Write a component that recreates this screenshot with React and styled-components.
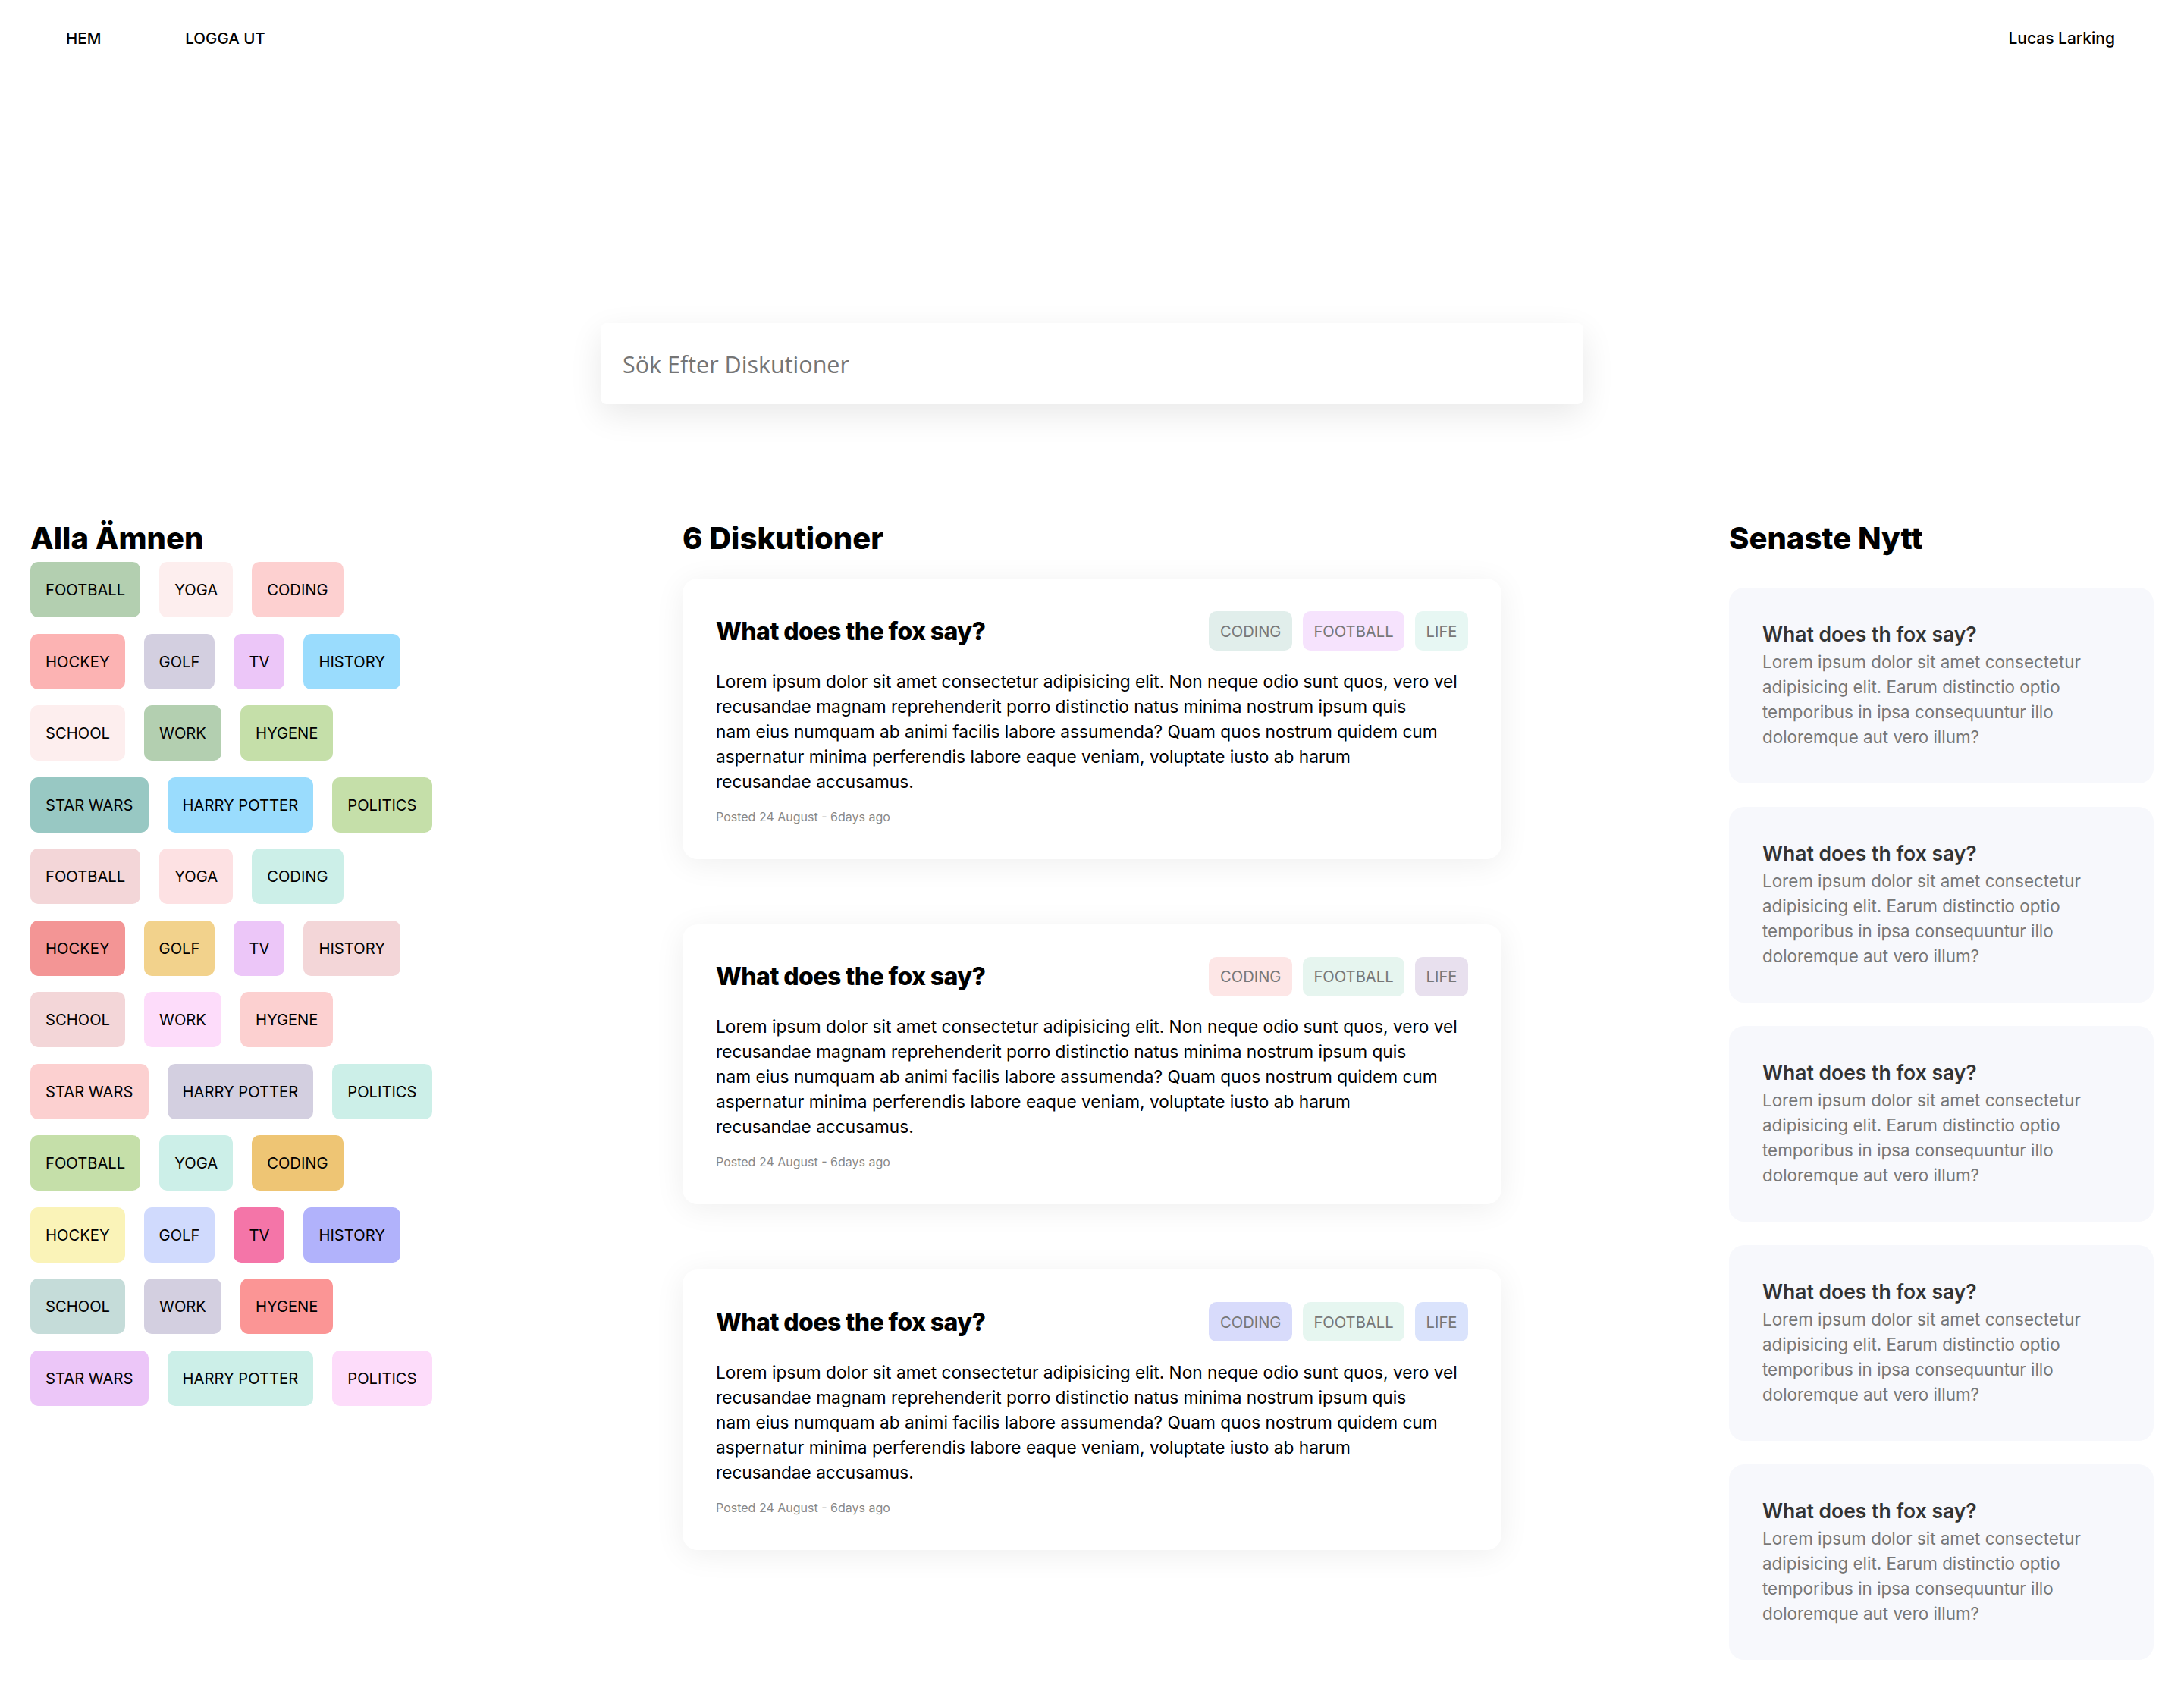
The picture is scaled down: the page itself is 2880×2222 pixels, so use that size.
import React from "react";
import styled, { createGlobalStyle } from "styled-components";

const GlobalStyle = createGlobalStyle`
  html, body {
    margin: 0;
    padding: 0;
    background: #ffffff;
  }
  body {
    font-family: Inter, "Noto Sans", sans-serif;
    color: #000;
  }
  * { box-sizing: border-box; }
`;

const Page = styled.div`
  width: 2880px;
  min-height: 2222px;
  background: #fff;
`;

const Header = styled.header`
  display: flex;
  align-items: center;
  height: 100px;
  padding: 0 91px 0 87px;
`;

const NavLinks = styled.nav`
  display: flex;
  gap: 111px;
`;

const NavLink = styled.a`
  font-size: 20.5px;
  font-weight: 500;
  text-transform: uppercase;
  color: #000;
  text-decoration: none;
`;

const UserName = styled.span`
  margin-left: auto;
  font-size: 21px;
  font-weight: 500;
`;

const SearchWrap = styled.div`
  display: flex;
  justify-content: center;
  margin-top: 326px;
`;

const SearchInput = styled.input`
  width: 1296px;
  height: 107px;
  border: none;
  outline: none;
  border-radius: 8px;
  padding: 0 29px;
  font-family: "Open Sans", "Noto Sans", sans-serif;
  font-size: 30.5px;
  background: #fff;
  box-shadow: 0 14px 44px rgba(0, 0, 0, 0.09);
  &::placeholder {
    color: #757575;
  }
`;

const Main = styled.main`
  display: flex;
  justify-content: space-between;
  align-items: flex-start;
  padding: 0 40px;
  margin-top: 153px;
`;

const Column = styled.section`
  width: ${(p) => p.$width}px;
  display: flex;
  flex-direction: column;
`;

const Heading = styled.h2`
  margin: 0 0 ${(p) => p.$gap}px;
  font-size: 40px;
  line-height: 48px;
  font-weight: 800;
  letter-spacing: 0;
`;

const TagGrid = styled.div`
  display: flex;
  flex-direction: column;
  gap: 21.5px;
`;

const TagRow = styled.div`
  display: flex;
  gap: 25px;
`;

const Tag = styled.span`
  display: inline-flex;
  align-items: center;
  height: 73px;
  padding: 0 20px;
  border-radius: 10px;
  font-size: 20.2px;
  color: #000;
  background: ${(p) => p.$bg};
  text-transform: uppercase;
`;

const Card = styled.article`
  background: #fff;
  border-radius: 20px;
  padding: 43px 44px 44px;
  box-shadow: 0 6px 40px rgba(0, 0, 0, 0.065);
  margin-bottom: 86px;
`;

const CardHead = styled.div`
  display: flex;
  justify-content: space-between;
  align-items: center;
`;

const CardTitle = styled.h3`
  margin: 0;
  font-size: 32px;
  font-weight: 800;
  letter-spacing: -0.6px;
`;

const ChipList = styled.div`
  display: flex;
  gap: 14px;
`;

const Chip = styled.span`
  display: inline-flex;
  align-items: center;
  height: 52px;
  padding: 0 14.5px;
  border-radius: 10px;
  font-size: 20.2px;
  color: #777;
  background: ${(p) => p.$bg};
`;

const CardBody = styled.p`
  margin: 23.5px 0 0;
  font-size: 22.7px;
  line-height: 33px;
  color: #000;
`;

const BodyLine = styled.span`
  display: block;
  white-space: nowrap;
`;

const Posted = styled.div`
  margin-top: 18px;
  font-size: 16px;
  line-height: 24px;
  color: #888;
`;

const NewsCard = styled.article`
  background: #f7f8fc;
  border-radius: 20px;
  padding: 42px 44px 44.5px;
  margin-bottom: 31.5px;
`;

const NewsTitle = styled.h4`
  margin: 0;
  font-size: 26.5px;
  line-height: 39px;
  font-weight: 600;
  color: #333;
`;

const NewsBody = styled.p`
  margin: 0;
  font-size: 22.4px;
  line-height: 33px;
  color: #777;
`;

const tagRows = [
  [["Football", "#b3cfb0"], ["Yoga", "#fdeeee"], ["Coding", "#fdd0d0"]],
  [["Hockey", "#fcb3b3"], ["Golf", "#d3cfe0"], ["TV", "#ecc6f8"], ["History", "#9adcfd"]],
  [["School", "#fdeeee"], ["Work", "#b3cfb0"], ["Hygene", "#c5dfa9"]],
  [["Star Wars", "#98c8c3"], ["Harry Potter", "#9adcfd"], ["Politics", "#c5dfa9"]],
  [["Football", "#f3d6d8"], ["Yoga", "#fde1e3"], ["Coding", "#ccefe8"]],
  [["Hockey", "#f39595"], ["Golf", "#f2d28c"], ["TV", "#ecc6f8"], ["History", "#f3d6d8"]],
  [["School", "#f3d6d8"], ["Work", "#fddcfa"], ["Hygene", "#fcd0d0"]],
  [["Star Wars", "#fcd0d0"], ["Harry Potter", "#d3cfe0"], ["Politics", "#ccefe8"]],
  [["Football", "#c5dfa9"], ["Yoga", "#ccefe8"], ["Coding", "#eec574"]],
  [["Hockey", "#faf3b8"], ["Golf", "#d0dafd"], ["TV", "#f475a8"], ["History", "#b1b2fb"]],
  [["School", "#c5dcd9"], ["Work", "#d3cfe0"], ["Hygene", "#fb9595"]],
  [["Star Wars", "#ecc6f8"], ["Harry Potter", "#ccefe8"], ["Politics", "#fddcfa"]],
];

const discussions = [
  ["#e1eeeb", "#f6e3fd", "#e7f7f3"],
  ["#fde6e6", "#e6f5ef", "#e8e0ee"],
  ["#d8dbfb", "#e6f6f0", "#dae3fc"],
];

const loremLines = [
  "Lorem ipsum dolor sit amet consectetur adipisicing elit. Non neque odio sunt quos, vero vel",
  "recusandae magnam reprehenderit porro distinctio natus minima nostrum ipsum quis",
  "nam eius numquam ab animi facilis labore assumenda? Quam quos nostrum quidem cum",
  "aspernatur minima perferendis labore eaque veniam, voluptate iusto ab harum",
  "recusandae accusamus.",
];

const newsLorem =
  "Lorem ipsum dolor sit amet consectetur adipisicing elit. Earum distinctio optio temporibus in ipsa consequuntur illo doloremque aut vero illum?";

export default function App() {
  return (
    <Page>
      <GlobalStyle />
      <Header>
        <NavLinks>
          <NavLink href="#">Hem</NavLink>
          <NavLink href="#">Logga ut</NavLink>
        </NavLinks>
        <UserName>Lucas Larking</UserName>
      </Header>

      <SearchWrap>
        <SearchInput placeholder="Sök Efter Diskutioner" />
      </SearchWrap>

      <Main>
        <Column $width={560}>
          <Heading $gap={7}>Alla Ämnen</Heading>
          <TagGrid>
            {tagRows.map((row, i) => (
              <TagRow key={i}>
                {row.map(([name, bg]) => (
                  <Tag key={name} $bg={bg}>
                    {name}
                  </Tag>
                ))}
              </TagRow>
            ))}
          </TagGrid>
        </Column>

        <Column $width={1080}>
          <Heading $gap={29}>6 Diskutioner</Heading>
          {discussions.map((colors, i) => (
            <Card key={i}>
              <CardHead>
                <CardTitle>What does the fox say?</CardTitle>
                <ChipList>
                  <Chip $bg={colors[0]}>CODING</Chip>
                  <Chip $bg={colors[1]}>FOOTBALL</Chip>
                  <Chip $bg={colors[2]}>LIFE</Chip>
                </ChipList>
              </CardHead>
              <CardBody>
                {loremLines.map((line, j) => (
                  <BodyLine key={j}>{line}</BodyLine>
                ))}
              </CardBody>
              <Posted>Posted 24 August - 6days ago</Posted>
            </Card>
          ))}
        </Column>

        <Column $width={560}>
          <Heading $gap={41}>Senaste Nytt</Heading>
          {[0, 1, 2, 3, 4].map((i) => (
            <NewsCard key={i}>
              <NewsTitle>What does th fox say?</NewsTitle>
              <NewsBody>{newsLorem}</NewsBody>
            </NewsCard>
          ))}
        </Column>
      </Main>
    </Page>
  );
}
